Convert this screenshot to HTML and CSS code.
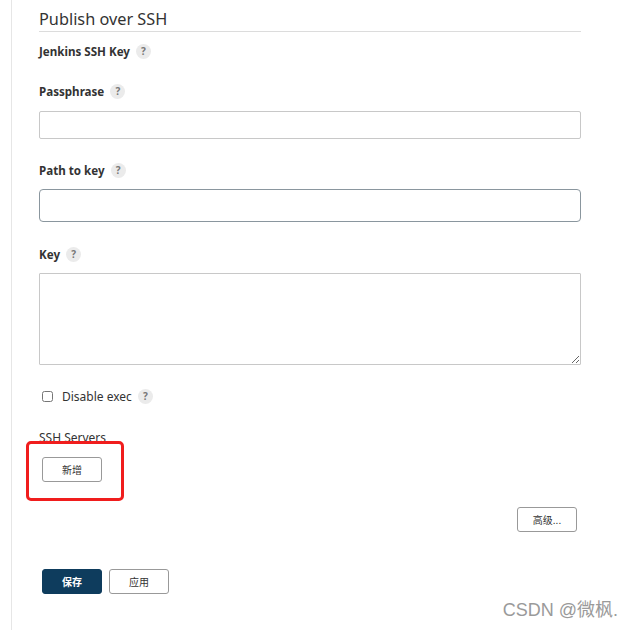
FILE: index.html
```html
<!DOCTYPE html>
<html lang="zh-CN">
<head>
    <meta charset="UTF-8">
    <meta name="viewport" content="width=device-width, initial-scale=1.0">
    <title>Publish over SSH</title>
    <link rel="stylesheet" href="styles.css">
</head>
<body>
    <div class="page">
        <h2 class="section-title">Publish over SSH</h2>

        <div class="field first">
            <div class="label">Jenkins SSH Key <span class="help">?</span></div>
        </div>

        <div class="field">
            <div class="label">Passphrase <span class="help">?</span></div>
            <input type="text" class="text-input">
        </div>

        <div class="field">
            <div class="label">Path to key <span class="help">?</span></div>
            <input type="text" class="text-input focused">
        </div>

        <div class="field">
            <div class="label">Key <span class="help">?</span></div>
            <textarea class="text-area"></textarea>
        </div>

        <div class="check-row">
            <input type="checkbox" id="disableExec">
            <label for="disableExec">Disable exec</label>
            <span class="help">?</span>
        </div>

        <div class="servers">
            <div class="servers-title">SSH Servers</div>
            <div class="mark"></div>
            <button class="btn add-btn">新增</button>
        </div>

        <div class="advanced-row">
            <button class="btn">高级...</button>
        </div>

        <div class="bottom-bar">
            <button class="btn primary">保存</button>
            <button class="btn">应用</button>
        </div>
    </div>

    <div class="watermark">CSDN @微枫.</div>
</body>
</html>
```

FILE: styles.css
```css
body {
    margin: 0;
    font-family: "Noto Sans", "Open Sans", "Noto Sans CJK SC", sans-serif;
    color: #333;
    background: white;
}
.page {
    margin-left: 11px;
    border-left: 1px solid #e6e6e6;
    padding: 0 51px 36px 27px;
    min-height: 594px;
    width: 542px;
}
.section-title {
    margin: 0;
    padding-top: 8px;
    height: 23px;
    font-size: 16.3px;
    font-weight: normal;
    line-height: 23px;
    color: #333;
    border-bottom: 1px solid #dcdcdc;
}
.label {
    display: flex;
    align-items: center;
    height: 20px;
    font-size: 11.6px;
    font-weight: bold;
    color: #333;
}
.field.first {
    margin-top: 9px;
}
.field + .field {
    margin-top: 20px;
}
.field + .field + .field {
    margin-top: 21px;
}
.field + .field + .field + .field {
    margin-top: 22px;
}
.help {
    display: inline-flex;
    align-items: center;
    justify-content: center;
    width: 15px;
    height: 15px;
    margin-left: 6px;
    border-radius: 50%;
    background: #ebebeb;
    color: #777;
    font-size: 10px;
    font-weight: bold;
}
.text-input {
    display: block;
    box-sizing: border-box;
    width: 542px;
    height: 28px;
    margin-top: 10px;
    border: 1px solid #c8c8c8;
    border-radius: 2px;
    outline: none;
}
.text-input.focused {
    height: 33px;
    margin-top: 9px;
    border-color: #8a969e;
    border-radius: 4px;
}
.text-area {
    display: block;
    box-sizing: border-box;
    width: 542px;
    height: 92px;
    margin-top: 9px;
    border: 1px solid #c8c8c8;
    border-radius: 1px;
    resize: vertical;
    outline: none;
}
.check-row {
    display: flex;
    align-items: center;
    height: 20px;
    margin-top: 21px;
    font-size: 12px;
}
.check-row input {
    width: 11px;
    height: 11px;
    margin: 0 9px 0 3px;
}
.check-row label {
    color: #333;
}
.servers {
    position: relative;
    margin-top: 21px;
}
.servers-title {
    height: 20px;
    line-height: 22px;
    font-size: 12px;
    color: #333;
}
.mark {
    position: absolute;
    left: -13px;
    top: 14px;
    width: 92px;
    height: 54px;
    border: 3px solid #f01d1d;
    border-radius: 5px;
    background: white;
}
.btn {
    box-sizing: border-box;
    width: 60px;
    height: 25px;
    background: white;
    border: 1px solid #999;
    border-radius: 3px;
    font-family: "Noto Sans CJK SC", sans-serif;
    font-size: 10px;
    color: #333;
    cursor: pointer;
}
.add-btn {
    position: relative;
    display: block;
    margin: 10px 0 0 3px;
}
.advanced-row {
    display: flex;
    justify-content: flex-end;
    padding-right: 4px;
    margin-top: 25px;
}
.bottom-bar {
    display: flex;
    gap: 7px;
    margin-top: 37px;
    padding-left: 3px;
}
.btn.primary {
    background: #0e3c5d;
    border-color: #0e3c5d;
    color: white;
    font-weight: bold;
}
.watermark {
    position: absolute;
    right: 14px;
    bottom: 9px;
    font-family: "Liberation Sans", "Noto Sans CJK SC", sans-serif;
    font-size: 18px;
    color: #9a9a9a;
}
```
